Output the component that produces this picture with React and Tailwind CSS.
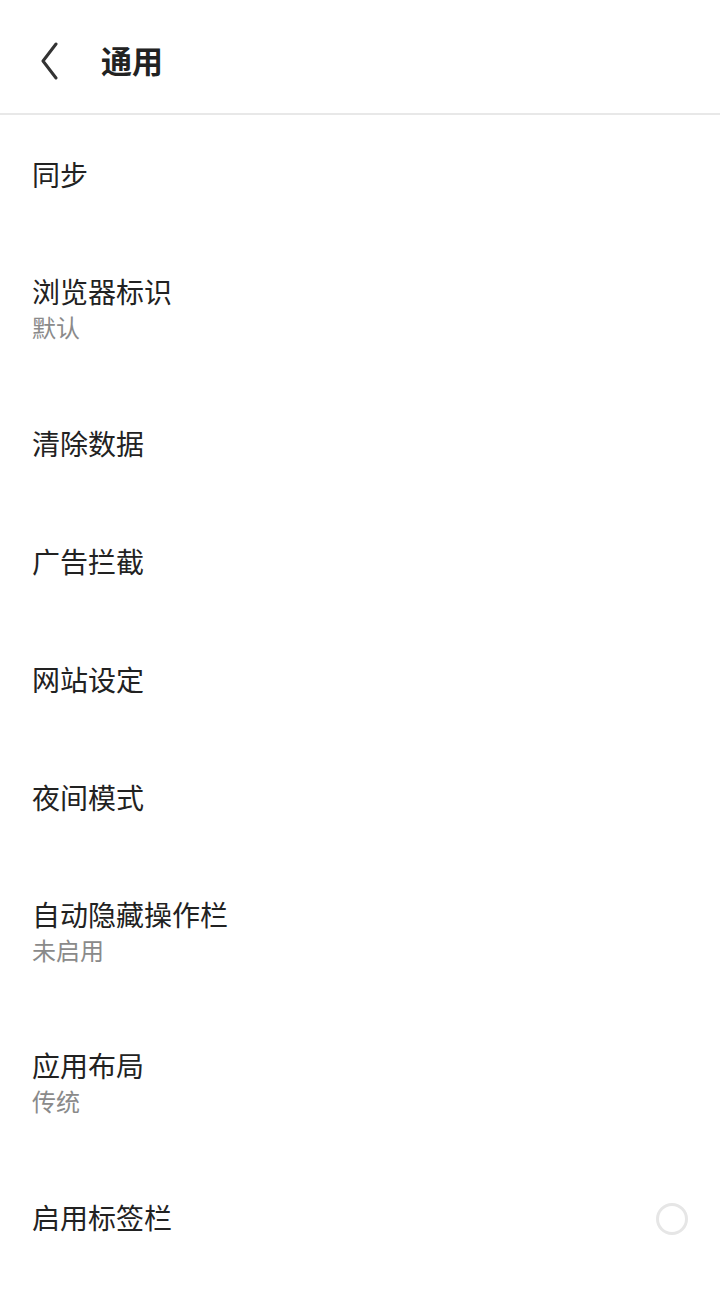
import React from "react";

const items = [
  { title: "同步" },
  { title: "浏览器标识", sub: "默认" },
  { title: "清除数据" },
  { title: "广告拦截" },
  { title: "网站设定" },
  { title: "夜间模式" },
  { title: "自动隐藏操作栏", sub: "未启用" },
  { title: "应用布局", sub: "传统" },
  { title: "启用标签栏", toggle: true },
];

const App = () => {
  return (
    <div
      className="min-h-[1314px] bg-white text-[#222222]"
      style={{ fontFamily: '"Noto Sans", "Noto Sans CJK SC", sans-serif' }}
    >
      <div className="h-[115px] pt-[9px] flex items-center border-b-2 border-[#e8e8e8]">
        <button className="ml-[36px] w-[26px] h-[40px] flex items-center justify-center">
          <svg width="22" height="38" viewBox="0 0 22 38" fill="none">
            <path
              d="M18 2 L5 19 L18 36"
              stroke="#333333"
              strokeWidth="3"
              strokeLinecap="round"
              strokeLinejoin="round"
            />
          </svg>
        </button>
        <h1 className="ml-[39px] text-[31px] font-bold leading-none">通用</h1>
      </div>
      <div>
        {items.map((item) => (
          <div
            key={item.title}
            className={
              "flex items-center justify-between px-[32px] pt-[3px] " +
              (item.sub ? "h-[151px]" : "h-[118px]")
            }
          >
            <div className="flex flex-col">
              <span className="text-[28px] leading-[35px]">{item.title}</span>
              {item.sub && (
                <span className="text-[24px] leading-[35px] text-[#8a8a8a]">
                  {item.sub}
                </span>
              )}
            </div>
            {item.toggle && (
              <div className="w-[32px] h-[32px] rounded-full border-[3px] border-[#e6e6e6]" />
            )}
          </div>
        ))}
      </div>
    </div>
  );
};

export default App;
